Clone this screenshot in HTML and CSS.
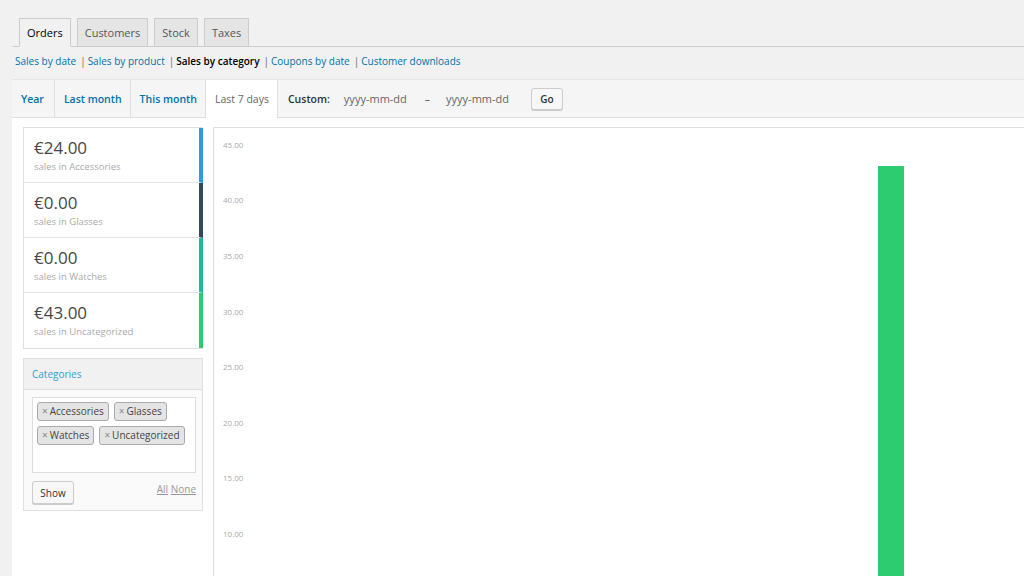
FILE: index.html
```html
<!DOCTYPE html>
<html>
<head>
    <title>Reports</title>
    <link rel="stylesheet" href="styles.css">
</head>
<body>
    <div class="wrap">
        <nav class="nav-tabs">
            <a class="nav-tab active">Orders</a>
            <a class="nav-tab">Customers</a>
            <a class="nav-tab">Stock</a>
            <a class="nav-tab">Taxes</a>
        </nav>
        <ul class="subsub">
            <li><a>Sales by date</a></li>
            <li><span class="sep">|</span><a>Sales by product</a></li>
            <li><span class="sep">|</span><b>Sales by category</b></li>
            <li><span class="sep">|</span><a>Coupons by date</a></li>
            <li><span class="sep">|</span><a>Customer downloads</a></li>
        </ul>

        <div class="stats">
            <div class="range">
                <a class="range-item">Year</a>
                <a class="range-item">Last month</a>
                <a class="range-item">This month</a>
                <a class="range-item active">Last 7 days</a>
                <div class="custom">
                    <b>Custom:</b>
                    <span class="date">yyyy-mm-dd</span>
                    <span class="dash">&ndash;</span>
                    <span class="date">yyyy-mm-dd</span>
                    <button class="btn go">Go</button>
                </div>
            </div>

            <div class="stats-body">
                <div class="sidebar">
                    <ul class="legend">
                        <li class="c-blue"><strong>&euro;24.00</strong><span>sales in Accessories</span></li>
                        <li class="c-navy"><strong>&euro;0.00</strong><span>sales in Glasses</span></li>
                        <li class="c-teal"><strong>&euro;0.00</strong><span>sales in Watches</span></li>
                        <li class="c-green"><strong>&euro;43.00</strong><span>sales in Uncategorized</span></li>
                    </ul>

                    <div class="widget">
                        <h4>Categories</h4>
                        <div class="widget-body">
                            <div class="chips">
                                <span class="chip"><i>&times;</i>Accessories</span>
                                <span class="chip"><i>&times;</i>Glasses</span>
                                <span class="chip"><i>&times;</i>Watches</span>
                                <span class="chip"><i>&times;</i>Uncategorized</span>
                            </div>
                            <div class="widget-foot">
                                <button class="btn">Show</button>
                                <div class="sel"><a>All</a> <a>None</a></div>
                            </div>
                        </div>
                    </div>
                </div>

                <div class="chart">
                    <span class="tick" style="top:11px">45.00</span>
                    <span class="tick" style="top:66px">40.00</span>
                    <span class="tick" style="top:122px">35.00</span>
                    <span class="tick" style="top:178px">30.00</span>
                    <span class="tick" style="top:233px">25.00</span>
                    <span class="tick" style="top:289px">20.00</span>
                    <span class="tick" style="top:344px">15.00</span>
                    <span class="tick" style="top:400px">10.00</span>
                    <div class="bar" style="left:664px;top:38px"></div>
                </div>
            </div>
        </div>
    </div>
</body>
</html>
```

FILE: styles.css
```css
*
{
    box-sizing: border-box;
}

html, body
{
    height: 100%;
}

body
{
    margin: 0;
    background: #f1f1f1;
    color: #444;
    font-family: "Open Sans", "Noto Sans", sans-serif;
    overflow: hidden;
}

a
{
    color: #0073aa;
    text-decoration: none;
}

.wrap
{
    padding: 18px 0 0 12px;
}

.nav-tabs
{
    display: flex;
    gap: 6px;
    padding-left: 6px;
    margin-left: 1px;
    border-bottom: 1px solid #ccc;
}

.nav-tab
{
    display: block;
    height: 29px;
    padding: 0 7px;
    margin-bottom: -1px;
    border: 1px solid #ccc;
    background: #e5e5e5;
    color: #555;
    font-size: 11px;
    line-height: 27px;
}

.nav-tab.active
{
    background: #f1f1f1;
    border-bottom-color: #f1f1f1;
    color: #000;
}

.subsub
{
    list-style: none;
    display: flex;
    margin: 0;
    padding: 7px 0 0 3px;
    height: 32px;
    font-size: 10px;
    line-height: 14px;
}

.subsub b
{
    font-weight: 600;
    color: #000;
}

.sep
{
    color: #666;
    padding: 0 2px 0 4px;
}

.stats
{
    border-top: 1px solid #e5e5e5;
    background: #fff;
    height: 500px;
}

.range
{
    display: flex;
    align-items: stretch;
    height: 38px;
    background: #f5f5f5;
    border-bottom: 1px solid #dfdfdf;
}

.range-item
{
    display: flex;
    align-items: center;
    padding: 0 8px 0 9px;
    border-right: 1px solid #dfdfdf;
    font-size: 10.5px;
    font-weight: 600;
}

.range-item:first-child
{
    padding-right: 10px;
}

.range-item.active
{
    background: #fff;
    color: #666;
    font-weight: 400;
    margin-bottom: -1px;
}

.custom
{
    display: flex;
    align-items: center;
    padding-left: 10px;
    font-size: 10.5px;
    color: #666;
}

.custom b
{
    color: #333;
    font-weight: 600;
    margin-right: 14px;
}

.date
{
    font-size: 11px;
}

.dash
{
    padding: 0 16px 0 18px;
    color: #555;
}

.btn
{
    font-family: inherit;
    font-size: 10px;
    color: #333;
    background: #f7f7f7;
    border: 1px solid #ccc;
    border-radius: 3px;
    box-shadow: 0 1px 0 #ccc;
    cursor: pointer;
}

.go
{
    margin-left: 22px;
    width: 32px;
    height: 22px;
    font-weight: 600;
}

.stats-body
{
    display: flex;
    gap: 10px;
    padding: 9px 0 0 11px;
}

.sidebar
{
    width: 180px;
    flex: none;
}

.legend
{
    list-style: none;
    margin: 0;
    padding: 0;
    border: 1px solid #dfdfdf;
    border-right: 0;
}

.legend li
{
    height: 55px;
    padding: 9px 0 0 10px;
    border-right: 4px solid;
    border-bottom: 1px solid #e5e5e5;
}

.legend li:last-child
{
    border-bottom: 0;
}

.legend strong
{
    display: block;
    font-weight: 400;
    font-size: 17px;
    line-height: 22px;
    color: #464646;
}

.legend span
{
    display: block;
    font-size: 9.5px;
    color: #aaa;
    margin-top: 1px;
}

.c-blue { border-right-color: #3498db !important; }
.c-navy { border-right-color: #34495e !important; }
.c-teal { border-right-color: #1abc9c !important; }
.c-green { border-right-color: #2ecc71 !important; }

.widget
{
    margin-top: 9px;
    border: 1px solid #dfdfdf;
    background: #fafafa;
}

.widget h4
{
    margin: 0;
    height: 31px;
    padding-left: 8px;
    font-size: 10px;
    font-weight: 400;
    line-height: 30px;
    color: #2ea2cc;
    background: #f1f1f1;
    border-bottom: 1px solid #dfdfdf;
}

.widget-body
{
    padding: 7px 6px 6px 8px;
}

.chips
{
    display: flex;
    flex-wrap: wrap;
    align-content: flex-start;
    gap: 5px 5px;
    height: 76px;
    padding: 4px 4px;
    background: #fff;
    border: 1px solid #ddd;
}

.chip
{
    height: 19px;
    padding: 0 4px;
    font-size: 10px;
    line-height: 17px;
    color: #444;
    background: #e4e4e4;
    border: 1px solid #aaa;
    border-radius: 3px;
}

.chip i
{
    font-style: normal;
    color: #888;
    margin-right: 2px;
}

.widget-foot
{
    display: flex;
    justify-content: space-between;
    align-items: center;
    margin-top: 8px;
}

.widget-foot .btn
{
    height: 23px;
    width: 42px;
    font-size: 10px;
}

.sel
{
    font-size: 10px;
    margin-top: -7px;
}

.sel a
{
    color: #999;
    text-decoration: underline;
}

.chart
{
    position: relative;
    flex: 1;
    height: 460px;
    border: 1px solid #dfdfdf;
    border-right: 0;
}

.tick
{
    position: absolute;
    left: 9px;
    font-size: 8px;
    color: #aaa;
}

.bar
{
    position: absolute;
    width: 26px;
    height: 420px;
    background: #2ecc71;
}
```
